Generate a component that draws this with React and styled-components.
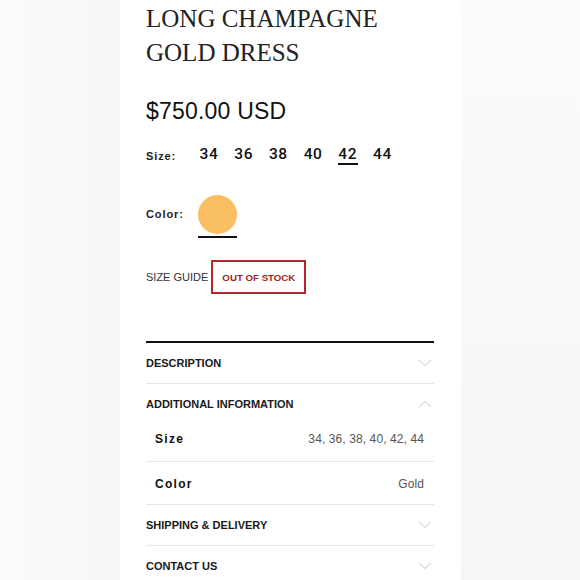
import React from "react";
import styled, { createGlobalStyle } from "styled-components";

const Global = createGlobalStyle`
  html, body { margin: 0; padding: 0; background: #fafafa; }
  body { font-family: "Liberation Sans", Arial, sans-serif; color: #111; }
`;

const Page = styled.div`
  display: flex;
  width: 580px;
  height: 580px;
  overflow: hidden;
`;

const Side = styled.div`
  width: ${(p) => p.$w}px;
  flex: ${(p) => (p.$grow ? 1 : "none")};
  background: ${(p) => p.$bg};
`;

const Column = styled.div`
  width: 341px;
  box-sizing: border-box;
  padding: 2px 27px 0 26px;
  background: #fff;
  display: flex;
  flex-direction: column;
`;

const Title = styled.h1`
  margin: 0;
  font-family: "Liberation Serif", "Times New Roman", serif;
  font-weight: 400;
  font-size: 25px;
  line-height: 34px;
  color: #222;
`;

const Price = styled.div`
  margin-top: 28px;
  font-size: 23px;
  line-height: 26px;
  letter-spacing: 0.2px;
  color: #111;
`;

const OptionRow = styled.div`
  display: flex;
  align-items: center;
  margin-top: ${(p) => p.$mt}px;
`;

const OptionLabel = styled.div`
  width: 53px;
  padding-bottom: ${(p) => p.$pb || 0}px;
  font-size: 11px;
  font-weight: 700;
  letter-spacing: 0.9px;
  color: #222;
`;

const Sizes = styled.div`
  display: flex;
  gap: 14.7px;
`;

const SizeItem = styled.div`
  width: 20px;
  text-align: center;
  font-family: Roboto, "Liberation Sans", sans-serif;
  font-weight: 500;
  font-size: 15.5px;
  line-height: 16px;
  letter-spacing: 0.6px;
  color: #111;
  padding-bottom: 1px;
  border-bottom: 2px solid ${(p) => (p.$active ? "#111" : "transparent")};
`;

const Swatch = styled.div`
  margin-left: -1px;
  width: 39px;
  padding-bottom: 2px;
  border-bottom: 2px solid #111;
`;

const Circle = styled.div`
  width: 39px;
  height: 39px;
  border-radius: 50%;
  background: ${(p) => p.$c};
`;

const GuideRow = styled.div`
  display: flex;
  align-items: center;
  gap: 3px;
  margin-top: 22px;
`;

const Guide = styled.span`
  font-size: 11px;
  color: #333;
`;

const Stock = styled.div`
  height: 34px;
  box-sizing: border-box;
  padding: 0 9px;
  display: flex;
  align-items: center;
  border: 2px solid #b3262b;
  color: #a01e23;
  font-size: 9.7px;
  font-weight: 700;
`;

const Accordion = styled.div`
  margin-top: 47px;
  border-top: 2px solid #111;
`;

const Header = styled.div`
  display: flex;
  align-items: center;
  justify-content: space-between;
  height: ${(p) => p.$h}px;
  border-bottom: ${(p) => (p.$line ? "1px solid #e6e6e6" : "none")};
  font-size: 11px;
  font-weight: 700;
  color: #1a1a1a;
  padding-right: 2px;
`;

const DetailRow = styled.div`
  display: flex;
  align-items: center;
  justify-content: space-between;
  box-sizing: border-box;
  height: ${(p) => p.$h}px;
  padding: ${(p) => p.$pt || 0}px 10px ${(p) => p.$pb || 0}px 9px;
  border-bottom: 1px solid #e6e6e6;
`;

const DetailKey = styled.span`
  font-size: 12px;
  font-weight: 700;
  letter-spacing: 1.3px;
  color: #111;
`;

const DetailVal = styled.span`
  font-size: 12px;
  letter-spacing: 0.1px;
  color: #555;
`;

const Chevron = ({ up }) => (
  <svg width="14" height="8" viewBox="0 0 14 8" fill="none">
    <path
      d={up ? "M1 7 L7 1.5 L13 7" : "M1 1 L7 6.5 L13 1"}
      stroke="#c4c4c4"
      strokeWidth="1"
    />
  </svg>
);

export default function App() {
  const sizes = ["34", "36", "38", "40", "42", "44"];
  return (
    <>
      <Global />
      <Page>
        <Side $w={120} $bg="linear-gradient(90deg,#fbfbfb,#f8f7f7)" />
        <Column>
          <Title>
            LONG CHAMPAGNE
            <br />
            GOLD DRESS
          </Title>
          <Price>$750.00 USD</Price>
          <OptionRow $mt={22}>
            <OptionLabel>Size:</OptionLabel>
            <Sizes>
              {sizes.map((s) => (
                <SizeItem key={s} $active={s === "42"}>
                  {s}
                </SizeItem>
              ))}
            </Sizes>
          </OptionRow>
          <OptionRow $mt={30}>
            <OptionLabel $pb={5}>Color:</OptionLabel>
            <Swatch>
              <Circle $c="#fbbf63" />
            </Swatch>
          </OptionRow>
          <GuideRow>
            <Guide>SIZE GUIDE</Guide>
            <Stock>OUT OF STOCK</Stock>
          </GuideRow>
          <Accordion>
            <Header $h={40} $line>
              DESCRIPTION
              <Chevron />
            </Header>
            <Header $h={40}>
              ADDITIONAL INFORMATION
              <Chevron up />
            </Header>
            <DetailRow $h={38} $pb={7}>
              <DetailKey>Size</DetailKey>
              <DetailVal>34, 36, 38, 40, 42, 44</DetailVal>
            </DetailRow>
            <DetailRow $h={43} $pt={2}>
              <DetailKey>Color</DetailKey>
              <DetailVal>Gold</DetailVal>
            </DetailRow>
            <Header $h={40} $line>
              SHIPPING &amp; DELIVERY
              <Chevron />
            </Header>
            <Header $h={40}>
              CONTACT US
              <Chevron />
            </Header>
          </Accordion>
        </Column>
        <Side $grow $bg="linear-gradient(180deg,#fbfbfb,#f7f6f6)" />
      </Page>
    </>
  );
}
